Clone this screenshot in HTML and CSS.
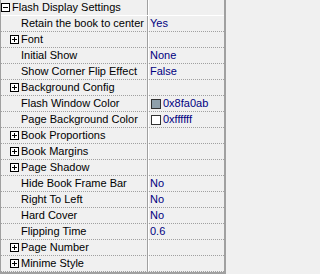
FILE: index.html
```html
<!DOCTYPE html>
<html>
<head>
<meta charset="utf-8">
<link rel="stylesheet" href="styles.css">
</head>
<body>
<div class="grid">
  <div class="row top">
    <div class="name lvl0"><span class="box minus"></span>Flash Display Settings</div>
    <div class="val"></div>
  </div>
  <div class="row"><div class="name item">Retain the book to center</div><div class="val">Yes</div></div>
  <div class="row"><div class="name cat"><span class="box plus"></span>Font</div><div class="val"></div></div>
  <div class="row"><div class="name item">Initial Show</div><div class="val">None</div></div>
  <div class="row"><div class="name item">Show Corner Flip Effect</div><div class="val">False</div></div>
  <div class="row"><div class="name cat"><span class="box plus"></span>Background Config</div><div class="val"></div></div>
  <div class="row"><div class="name item">Flash Window Color</div><div class="val"><span class="swatch grey"></span>0x8fa0ab</div></div>
  <div class="row"><div class="name item">Page Background Color</div><div class="val"><span class="swatch white"></span>0xffffff</div></div>
  <div class="row"><div class="name cat"><span class="box plus"></span>Book Proportions</div><div class="val"></div></div>
  <div class="row"><div class="name cat"><span class="box plus"></span>Book Margins</div><div class="val"></div></div>
  <div class="row"><div class="name cat"><span class="box plus"></span>Page Shadow</div><div class="val"></div></div>
  <div class="row"><div class="name item">Hide Book Frame Bar</div><div class="val">No</div></div>
  <div class="row"><div class="name item">Right To Left</div><div class="val">No</div></div>
  <div class="row"><div class="name item">Hard Cover</div><div class="val">No</div></div>
  <div class="row"><div class="name item">Flipping Time</div><div class="val">0.6</div></div>
  <div class="row"><div class="name cat"><span class="box plus"></span>Page Number</div><div class="val"></div></div>
  <div class="row"><div class="name cat"><span class="box plus"></span>Minime Style</div><div class="val"></div></div>
</div>
</body>
</html>
```
FILE: styles.css
```css
*, *::before, *::after {
  box-sizing: border-box;
}
html, body {
  margin: 0;
  padding: 0;
  background: #f0f0f0;
}
.grid {
  width: 226px;
  height: 274px;
  border-left: 1px solid #a0a0a0;
  border-right: 2px solid #a0a0a0;
  border-bottom: 2px solid #a0a0a0;
  background: #f0f0f0;
  font-family: "Liberation Sans", Arial, sans-serif;
  font-size: 11px;
  color: #000;
  overflow: hidden;
}
.row {
  display: flex;
  height: 16px;
  border-bottom: 1px dotted #a0a0a0;
}
.row.top {
  border-bottom: 1px solid #ffffff;
}
.name {
  width: 147px;
  flex: none;
  border-right: 1px solid #a0a0a0;
  display: flex;
  align-items: center;
  white-space: nowrap;
  overflow: hidden;
  line-height: 15px;
}
.val {
  flex: 1;
  min-width: 0;
  border-left: 1px solid #ffffff;
  display: flex;
  align-items: center;
  padding-left: 1px;
  color: #000080;
  white-space: nowrap;
  overflow: hidden;
  line-height: 15px;
}
.cat {
  padding-left: 9px;
}
.item {
  padding-left: 20px;
}
.box {
  position: relative;
  width: 9px;
  height: 9px;
  border: 1px solid #000;
  background: #fff;
  margin-right: 2px;
  flex: none;
}
.box::before {
  content: "";
  position: absolute;
  left: 1px;
  top: 3px;
  width: 5px;
  height: 1px;
  background: #000;
}
.plus::after {
  content: "";
  position: absolute;
  left: 3px;
  top: 1px;
  width: 1px;
  height: 5px;
  background: #000;
}
.minus {
  margin-left: 0;
  margin-right: 2px;
}
.swatch {
  width: 10px;
  height: 10px;
  border: 1px solid #303030;
  margin: 0 2px 0 1px;
  flex: none;
}
.swatch.grey {
  background: #8fa0ab;
}
.swatch.white {
  background: #ffffff;
}
```
